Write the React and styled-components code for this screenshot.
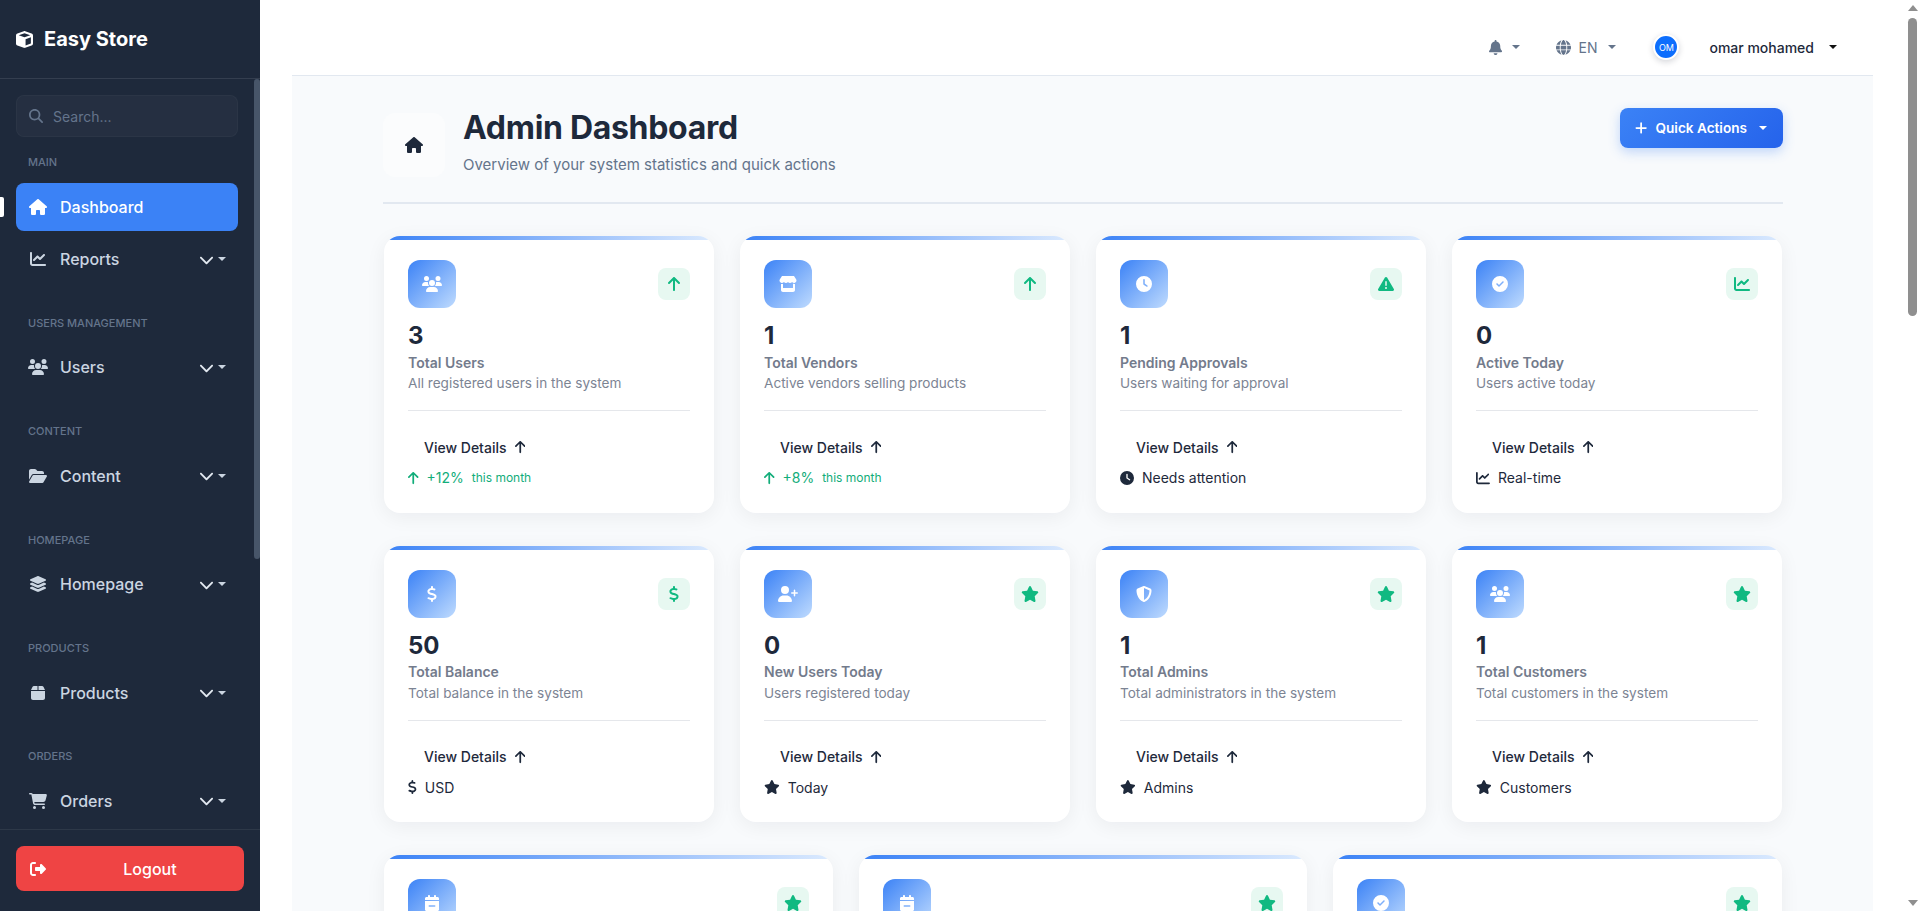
import React from "react";
import styled, { createGlobalStyle } from "styled-components";
import {
  FaArrowUp, FaBell, FaBox, FaCalendarMinus, FaCartShopping, FaChartLine, FaChevronDown, FaCircleCheck, FaClock,
  FaCube, FaDollarSign, FaFolderOpen, FaGlobe, FaHouse, FaLayerGroup, FaMagnifyingGlass,
  FaPlus, FaRightFromBracket, FaShieldHalved, FaStar, FaStore, FaTriangleExclamation, FaUserPlus, FaUsers,
} from "react-icons/fa6";

const GlobalStyle = createGlobalStyle`
  html, body { margin: 0; height: 100%; overflow: hidden; }
  body { font-family: Inter, "Noto Sans", "Liberation Sans", sans-serif; background: #fff; }
  * { box-sizing: border-box; }
`;

// react-icons draws every glyph in a 1em square, this gives them their real width back
const Glyph = styled.span`
  display: inline-flex;
  flex: none;
  font-size: ${(p) => (p.$size ? `${p.$size}px` : "inherit")};
  svg {
    width: ${(p) => p.$w || 1}em;
    height: 1em;
  }
`;

const Shell = styled.div`
  display: flex;
  height: 911px;
  overflow: hidden;
`;

const Sidebar = styled.aside`
  width: 260px;
  flex: none;
  display: flex;
  flex-direction: column;
  background: #1e293b;
  color: #cbd5e1;
`;

const Brand = styled.div`
  height: 79px;
  flex: none;
  display: flex;
  align-items: center;
  gap: 11px;
  padding: 0 16px;
  color: #fff;
  font-size: 20px;
  font-weight: 700;
  border-bottom: 1px solid rgba(255, 255, 255, 0.1);
`;

const NavArea = styled.nav`
  position: relative;
  flex: 1;
  min-height: 0;
  overflow: hidden;
  padding: 16px 22px 0 16px;
`;

const SideThumb = styled.div`
  position: absolute;
  top: 0;
  right: 0;
  width: 6px;
  height: 480px;
  background: #475569;
  border-radius: 3px;
`;

const SearchBox = styled.div`
  display: flex;
  align-items: center;
  gap: 10px;
  height: 42px;
  padding: 0 12px;
  background: rgba(255, 255, 255, 0.03);
  border: 1px solid rgba(255, 255, 255, 0.03);
  border-radius: 8px;
  color: #64748b;
  font-size: 14px;
  svg { font-size: 14px; }
`;

const SectionLabel = styled.div`
  height: 16.5px;
  margin: ${(p) => (p.$first ? "17px 0 12.5px" : "31.9px 0 12px")};
  padding-left: 12px;
  color: #64748b;
  font-size: 11px;
  font-weight: 500;
  line-height: 16.5px;
  text-transform: uppercase;
`;

const NavItem = styled.div`
  position: relative;
  display: flex;
  align-items: center;
  height: 48px;
  margin-bottom: ${(p) => (p.$active ? "4px" : "0")};
  padding: 0 12px 0 13px;
  border-radius: 8px;
  background: ${(p) => (p.$active ? "#3b82f6" : "transparent")};
  color: ${(p) => (p.$active ? "#fff" : "#cbd5e1")};
  font-size: 16px;
  font-weight: 500;
`;

const ActiveMark = styled.span`
  position: absolute;
  left: -16px;
  top: 14px;
  width: 4px;
  height: 20px;
  background: #fff;
  border-radius: 0 2px 2px 0;
`;

const NavIcon = styled.span`
  width: 18px;
  margin-right: 13px;
  display: flex;
  justify-content: center;
  font-size: 16px;
`;

const NavText = styled.span`
  flex: 1;
`;

const Chevron = styled(FaChevronDown)`
  font-size: 15px;
  color: #e2e8f0;
  margin-right: 4px;
`;

const Caret = styled.span`
  display: inline-block;
  width: 0;
  height: 0;
  margin-left: ${(p) => p.$ml || 0}px;
  border-top: 4px solid ${(p) => p.$color || "currentColor"};
  border-left: 4px solid transparent;
  border-right: 4px solid transparent;
`;

const SideFooter = styled.div`
  flex: none;
  padding: 16px 16px 20px;
  border-top: 1px solid rgba(255, 255, 255, 0.07);
`;

const LogoutButton = styled.div`
  display: flex;
  align-items: center;
  height: 45px;
  padding: 0 4px 0 14px;
  background: #ef4444;
  border-radius: 8px;
  color: #fff;
  font-size: 16px;
  font-weight: 500;
  svg { font-size: 16px; margin-right: 14px; }
  span { flex: 1; text-align: center; }
`;

const MainWrap = styled.div`
  flex: 1;
  min-width: 0;
  padding: 0 32px;
  background: #fff;
`;

const Surface = styled.div`
  height: 100%;
  background: #f8fafc;
`;

const TopBar = styled.header`
  display: flex;
  align-items: center;
  justify-content: flex-end;
  height: 76px;
  padding: 19px 36px 0 0;
  background: #fff;
  border-bottom: 1px solid #e2e8f0;
  color: #64748b;
  font-size: 14px;
`;

const TopItem = styled.div`
  display: flex;
  align-items: center;
  gap: ${(p) => p.$gap || 8}px;
  margin-left: ${(p) => p.$ml || 0}px;
`;

const Avatar = styled.div`
  width: 26px;
  height: 26px;
  display: flex;
  align-items: center;
  justify-content: center;
  border: 2px solid #fff;
  border-radius: 50%;
  background: #0d6efd;
  box-shadow: 0 2px 6px rgba(15, 23, 42, 0.18);
  color: #fff;
  font-size: 9px;
`;

const UserName = styled.span`
  color: #1e293b;
  font-weight: 500;
`;

const Content = styled.main`
  padding: 33px 90px 0 91px;
`;

const PageHeader = styled.div`
  display: flex;
  justify-content: space-between;
  align-items: flex-start;
  padding-bottom: 25px;
  border-bottom: 2px solid #e2e8f0;
`;

const HeaderLeft = styled.div`
  display: flex;
  gap: 18px;
`;

const HomeBox = styled.div`
  width: 62px;
  height: 64px;
  margin-top: 4px;
  display: flex;
  align-items: center;
  justify-content: center;
  background: #fbfcfd;
  border-radius: 12px;
  color: #1e293b;
  font-size: 16px;
`;

const Title = styled.h1`
  margin: 0;
  color: #1e293b;
  font-size: 32px;
  font-weight: 700;
  letter-spacing: -0.3px;
  line-height: 38.5px;
`;

const Subtitle = styled.p`
  margin: 6px 0 0;
  color: #64748b;
  font-size: 15px;
  line-height: 22.5px;
`;

const QuickActions = styled.div`
  display: flex;
  align-items: center;
  height: 40px;
  margin-top: -1px;
  padding: 0 16px 0 15px;
  gap: 8px;
  background: linear-gradient(135deg, #3b82f6, #2563eb);
  border-radius: 8px;
  box-shadow: 0 4px 12px rgba(59, 130, 246, 0.3);
  color: #fff;
  font-size: 13.6px;
  font-weight: 600;
`;

const CardGrid = styled.div`
  display: grid;
  grid-template-columns: repeat(${(p) => p.$cols}, 1fr);
  gap: 26px;
  margin: ${(p) => p.$mt}px 1px 0;
`;

const Card = styled.div`
  position: relative;
  min-height: 276px;
  padding: 24px 24px 24.5px;
  overflow: hidden;
  background: #fff;
  border-radius: 16px;
  box-shadow: 0 4px 20px rgba(15, 23, 42, 0.06);
  &::before {
    content: "";
    position: absolute;
    top: 0;
    left: 0;
    right: 0;
    height: 4px;
    background: linear-gradient(90deg, #3b82f6, #dbeafe);
  }
`;

const CardTop = styled.div`
  display: flex;
  justify-content: space-between;
  align-items: center;
`;

const CardIcon = styled.div`
  width: 48px;
  height: 48px;
  display: flex;
  align-items: center;
  justify-content: center;
  background: linear-gradient(135deg, #3b82f6, #bfdbfe);
  border-radius: 12px;
  color: #fff;
  font-size: 16px;
`;

const Badge = styled.div`
  width: 32px;
  height: 32px;
  display: flex;
  align-items: center;
  justify-content: center;
  background: #e7f8f1;
  border-radius: 8px;
  color: #10b981;
  font-size: 16px;
`;

const Value = styled.div`
  margin-top: 13px;
  color: #1e293b;
  font-size: 24px;
  font-weight: 700;
  line-height: 29px;
`;

const CardTitle = styled.div`
  margin-top: 1.5px;
  color: #737b8c;
  font-size: 14px;
  font-weight: 600;
  line-height: 21.5px;
`;

const CardDesc = styled.div`
  padding-bottom: 16px;
  border-bottom: 1px solid #e5e7eb;
  color: #7c8493;
  font-size: 13.6px;
  line-height: 21px;
`;

const DetailsLink = styled.div`
  display: flex;
  align-items: center;
  gap: 8px;
  margin-top: 25.5px;
  padding-left: 16px;
  color: #1e293b;
  font-size: 14px;
  font-weight: 500;
  line-height: 21px;
`;

const CardFoot = styled.div`
  display: flex;
  align-items: center;
  gap: 8px;
  margin-top: 9.5px;
  color: ${(p) => (p.$trend ? "#12ad7a" : "#1e293b")};
  font-size: 14px;
  line-height: 21px;
  small { font-size: 12px; }
`;

const PageScroll = styled.div`
  width: 15px;
  flex: none;
  display: flex;
  flex-direction: column;
  align-items: center;
  padding: 5px 0;
  background: #fff;
`;

const ScrollUp = styled.span`
  border-bottom: 6px solid #8f8f8f;
  border-left: 5px solid transparent;
  border-right: 5px solid transparent;
`;

const ScrollDown = styled.span`
  margin-top: auto;
  border-top: 6px solid #8f8f8f;
  border-left: 5px solid transparent;
  border-right: 5px solid transparent;
`;

const ScrollThumb = styled.div`
  width: 9px;
  height: 298px;
  margin-top: 7px;
  background: #8f8f8f;
  border-radius: 5px;
`;

const users = <Glyph $w={1.25}><FaUsers /></Glyph>;
const star = <Glyph $w={1.125}><FaStar /></Glyph>;
const dollar = <Glyph $w={0.625}><FaDollarSign /></Glyph>;
const arrow = <Glyph $w={0.75}><FaArrowUp /></Glyph>;
const house = <Glyph $w={1.125}><FaHouse /></Glyph>;

const navSections = [
  { label: "Main", items: [{ text: "Dashboard", icon: house, active: true }, { text: "Reports", icon: <FaChartLine />, sub: true }] },
  { label: "Users Management", items: [{ text: "Users", icon: users, sub: true }] },
  { label: "Content", items: [{ text: "Content", icon: <Glyph $w={1.125}><FaFolderOpen /></Glyph>, sub: true }] },
  { label: "Homepage", items: [{ text: "Homepage", icon: <Glyph $w={1.125}><FaLayerGroup /></Glyph>, sub: true }] },
  { label: "Products", items: [{ text: "Products", icon: <Glyph $w={0.875}><FaBox /></Glyph>, sub: true }] },
  { label: "Orders", items: [{ text: "Orders", icon: <Glyph $w={1.125}><FaCartShopping /></Glyph>, sub: true }] },
];

const firstRows = [
  { icon: users, badge: arrow, value: "3", title: "Total Users", desc: "All registered users in the system", trend: "+12%" },
  { icon: <Glyph $w={1.125}><FaStore /></Glyph>, badge: arrow, value: "1", title: "Total Vendors", desc: "Active vendors selling products", trend: "+8%" },
  { icon: <FaClock />, badge: <FaTriangleExclamation />, value: "1", title: "Pending Approvals", desc: "Users waiting for approval", footIcon: <FaClock />, foot: "Needs attention" },
  { icon: <FaCircleCheck />, badge: <FaChartLine />, value: "0", title: "Active Today", desc: "Users active today", footIcon: <FaChartLine />, foot: "Real-time" },
  { icon: dollar, badge: dollar, value: "50", title: "Total Balance", desc: "Total balance in the system", footIcon: dollar, foot: "USD" },
  { icon: <Glyph $w={1.25}><FaUserPlus /></Glyph>, badge: star, value: "0", title: "New Users Today", desc: "Users registered today", footIcon: star, foot: "Today" },
  { icon: <FaShieldHalved />, badge: star, value: "1", title: "Total Admins", desc: "Total administrators in the system", footIcon: star, foot: "Admins" },
  { icon: users, badge: star, value: "1", title: "Total Customers", desc: "Total customers in the system", footIcon: star, foot: "Customers" },
];

const calendar = <Glyph $w={0.875}><FaCalendarMinus /></Glyph>;
const lastRow = [calendar, calendar, <FaCircleCheck />];

const StatCard = ({ stat }) => (
  <Card>
    <CardTop>
      <CardIcon>{stat.icon}</CardIcon>
      <Badge>{stat.badge}</Badge>
    </CardTop>
    <Value>{stat.value}</Value>
    <CardTitle>{stat.title}</CardTitle>
    <CardDesc>{stat.desc}</CardDesc>
    <DetailsLink>View Details {arrow}</DetailsLink>
    {stat.trend ? (
      <CardFoot $trend>{arrow} {stat.trend} <small>this month</small></CardFoot>
    ) : (
      <CardFoot>{stat.footIcon} {stat.foot}</CardFoot>
    )}
  </Card>
);

export default function App() {
  return (
    <Shell>
      <GlobalStyle />
      <Sidebar>
        <Brand><FaCube size={17} /> Easy Store</Brand>
        <NavArea>
          <SideThumb />
          <SearchBox><FaMagnifyingGlass /> Search...</SearchBox>
          {navSections.map((section, i) => (
            <div key={section.label}>
              <SectionLabel $first={i === 0}>{section.label}</SectionLabel>
              {section.items.map((item) => (
                <NavItem key={item.text} $active={item.active}>
                  {item.active && <ActiveMark />}
                  <NavIcon>{item.icon}</NavIcon>
                  <NavText>{item.text}</NavText>
                  {item.sub && <><Chevron /><Caret /></>}
                </NavItem>
              ))}
            </div>
          ))}
        </NavArea>
        <SideFooter>
          <LogoutButton><FaRightFromBracket /><span>Logout</span></LogoutButton>
        </SideFooter>
      </Sidebar>
      <MainWrap>
        <Surface>
          <TopBar>
            <TopItem $gap={10}><Glyph $w={0.875} $size={15}><FaBell /></Glyph><Caret /></TopItem>
            <TopItem $ml={36} $gap={7}><FaGlobe size={15} /> EN <Caret $ml={4} /></TopItem>
            <TopItem $ml={37}><Avatar>OM</Avatar></TopItem>
            <TopItem $ml={30} $gap={15}><UserName>omar mohamed</UserName><Caret $color="#111" /></TopItem>
          </TopBar>
          <Content>
            <PageHeader>
              <HeaderLeft>
                <HomeBox>{house}</HomeBox>
                <div>
                  <Title>Admin Dashboard</Title>
                  <Subtitle>Overview of your system statistics and quick actions</Subtitle>
                </div>
              </HeaderLeft>
              <QuickActions><Glyph $w={0.875} $size={14}><FaPlus /></Glyph> Quick Actions <Caret $ml={4} /></QuickActions>
            </PageHeader>
            <CardGrid $cols={4} $mt={32}>
              {firstRows.slice(0, 4).map((s) => <StatCard key={s.title} stat={s} />)}
            </CardGrid>
            <CardGrid $cols={4} $mt={33}>
              {firstRows.slice(4).map((s) => <StatCard key={s.title} stat={s} />)}
            </CardGrid>
            <CardGrid $cols={3} $mt={33}>
              {lastRow.map((icon, i) => (
                <Card key={i}>
                  <CardTop>
                    <CardIcon>{icon}</CardIcon>
                    <Badge>{star}</Badge>
                  </CardTop>
                </Card>
              ))}
            </CardGrid>
          </Content>
        </Surface>
      </MainWrap>
      <PageScroll>
        <ScrollUp />
        <ScrollThumb />
        <ScrollDown />
      </PageScroll>
    </Shell>
  );
}
